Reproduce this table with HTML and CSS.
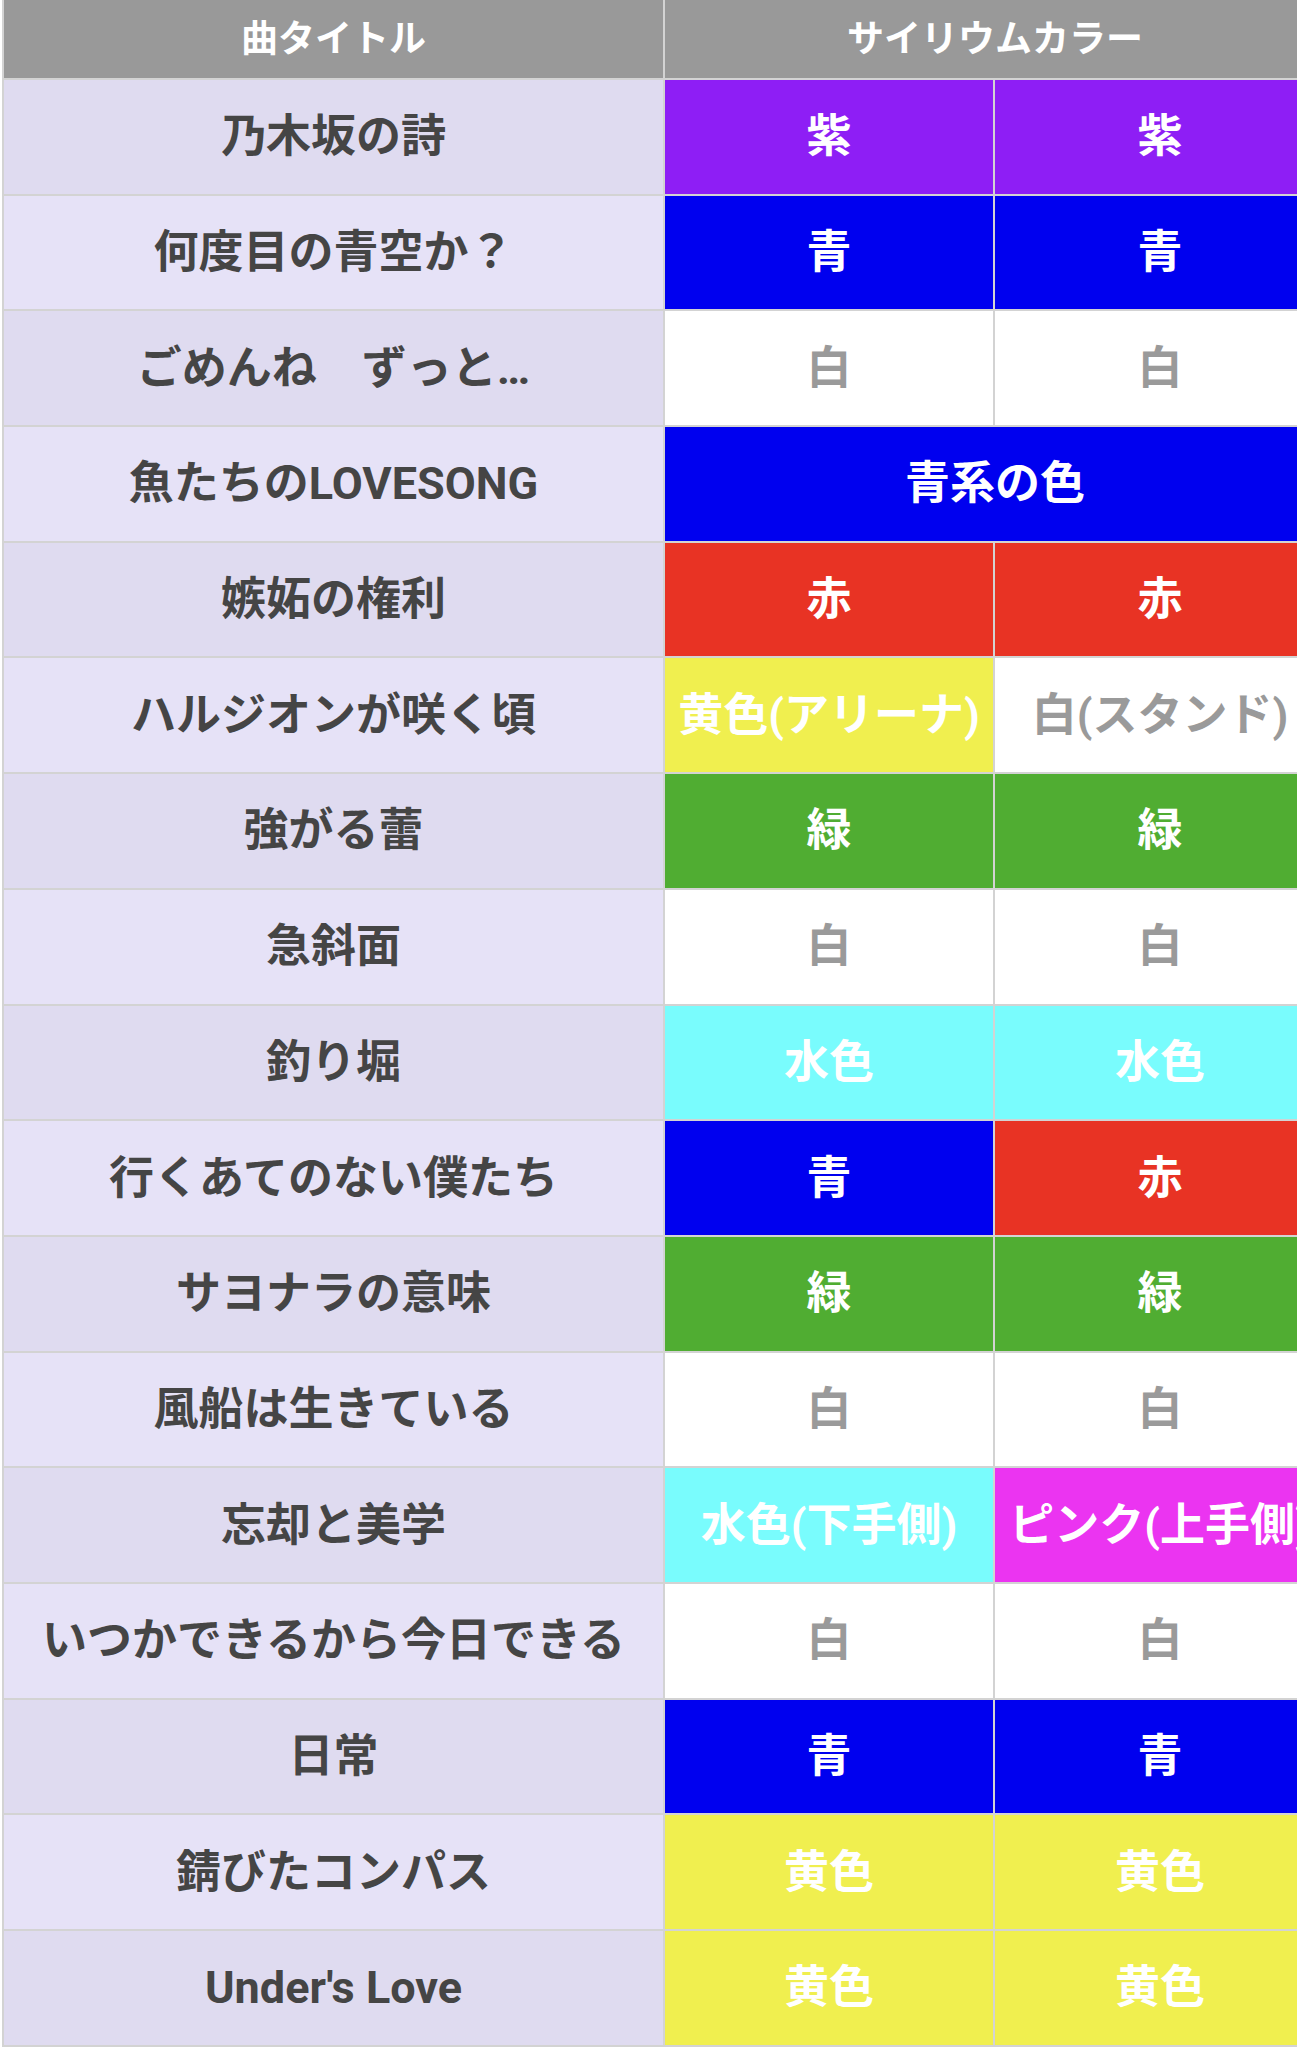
FILE: index.html
```html
<!DOCTYPE html>
<html lang="ja">
<head>
<meta charset="utf-8">
<title>サイリウムカラー</title>
<link rel="stylesheet" href="styles.css">
</head>
<body>
<div class="sheet">
  <div class="cell head">曲タイトル</div>
  <div class="cell head span2">サイリウムカラー</div>

  <div class="cell title odd">乃木坂の詩</div>
  <div class="cell c-purple">紫</div>
  <div class="cell c-purple">紫</div>

  <div class="cell title even">何度目の青空か？</div>
  <div class="cell c-blue">青</div>
  <div class="cell c-blue">青</div>

  <div class="cell title odd">ごめんね　ずっと…</div>
  <div class="cell c-white">白</div>
  <div class="cell c-white">白</div>

  <div class="cell title even">魚たちのLOVESONG</div>
  <div class="cell c-blue span2">青系の色</div>

  <div class="cell title odd">嫉妬の権利</div>
  <div class="cell c-red">赤</div>
  <div class="cell c-red">赤</div>

  <div class="cell title even">ハルジオンが咲く頃</div>
  <div class="cell c-yellow">黄色(アリーナ)</div>
  <div class="cell c-white">白(スタンド)</div>

  <div class="cell title odd">強がる蕾</div>
  <div class="cell c-green">緑</div>
  <div class="cell c-green">緑</div>

  <div class="cell title even">急斜面</div>
  <div class="cell c-white">白</div>
  <div class="cell c-white">白</div>

  <div class="cell title odd">釣り堀</div>
  <div class="cell c-cyan">水色</div>
  <div class="cell c-cyan">水色</div>

  <div class="cell title even">行くあてのない僕たち</div>
  <div class="cell c-blue">青</div>
  <div class="cell c-red">赤</div>

  <div class="cell title odd">サヨナラの意味</div>
  <div class="cell c-green">緑</div>
  <div class="cell c-green">緑</div>

  <div class="cell title even">風船は生きている</div>
  <div class="cell c-white">白</div>
  <div class="cell c-white">白</div>

  <div class="cell title odd">忘却と美学</div>
  <div class="cell c-cyan">水色(下手側)</div>
  <div class="cell c-pink">ピンク(上手側)</div>

  <div class="cell title even">いつかできるから今日できる</div>
  <div class="cell c-white">白</div>
  <div class="cell c-white">白</div>

  <div class="cell title odd">日常</div>
  <div class="cell c-blue">青</div>
  <div class="cell c-blue">青</div>

  <div class="cell title even">錆びたコンパス</div>
  <div class="cell c-yellow">黄色</div>
  <div class="cell c-yellow">黄色</div>

  <div class="cell title odd">Under's Love</div>
  <div class="cell c-yellow">黄色</div>
  <div class="cell c-yellow">黄色</div>
</div>
</body>
</html>
```

FILE: styles.css
```css
html, body {
  margin: 0;
  padding: 0;
  background: #ffffff;
  overflow: hidden;
}

.sheet {
  display: grid;
  grid-template-columns: 659px 328px 330px;
  grid-template-rows: 78px repeat(17, 113.7px);
  gap: 2px;
  width: max-content;
  margin-left: 2px;
  padding: 0 2px 2px 2px;
  background: #d3d3d3;
  font-family: Roboto, "Noto Sans CJK JP", sans-serif;
  font-weight: 700;
}

.cell {
  display: flex;
  align-items: center;
  justify-content: center;
  white-space: nowrap;
  font-size: 45px;
  line-height: 1;
  color: #ffffff;
}

.span2 {
  grid-column: span 2;
}

.head {
  background: #999999;
  color: #ffffff;
  font-size: 37px;
}

.title {
  color: #454545;
}

.odd {
  background: #dfdbf0;
}

.even {
  background: #e6e2f7;
}

.c-purple { background: #8e1ef5; }
.c-blue   { background: #0000ef; }
.c-white  { background: #ffffff; color: #9a9a9a; }
.c-red    { background: #e83324; }
.c-yellow { background: #f0ef4f; }
.c-green  { background: #50ad32; }
.c-cyan   { background: #79fcfd; }
.c-pink   { background: #eb34f1; }
```
